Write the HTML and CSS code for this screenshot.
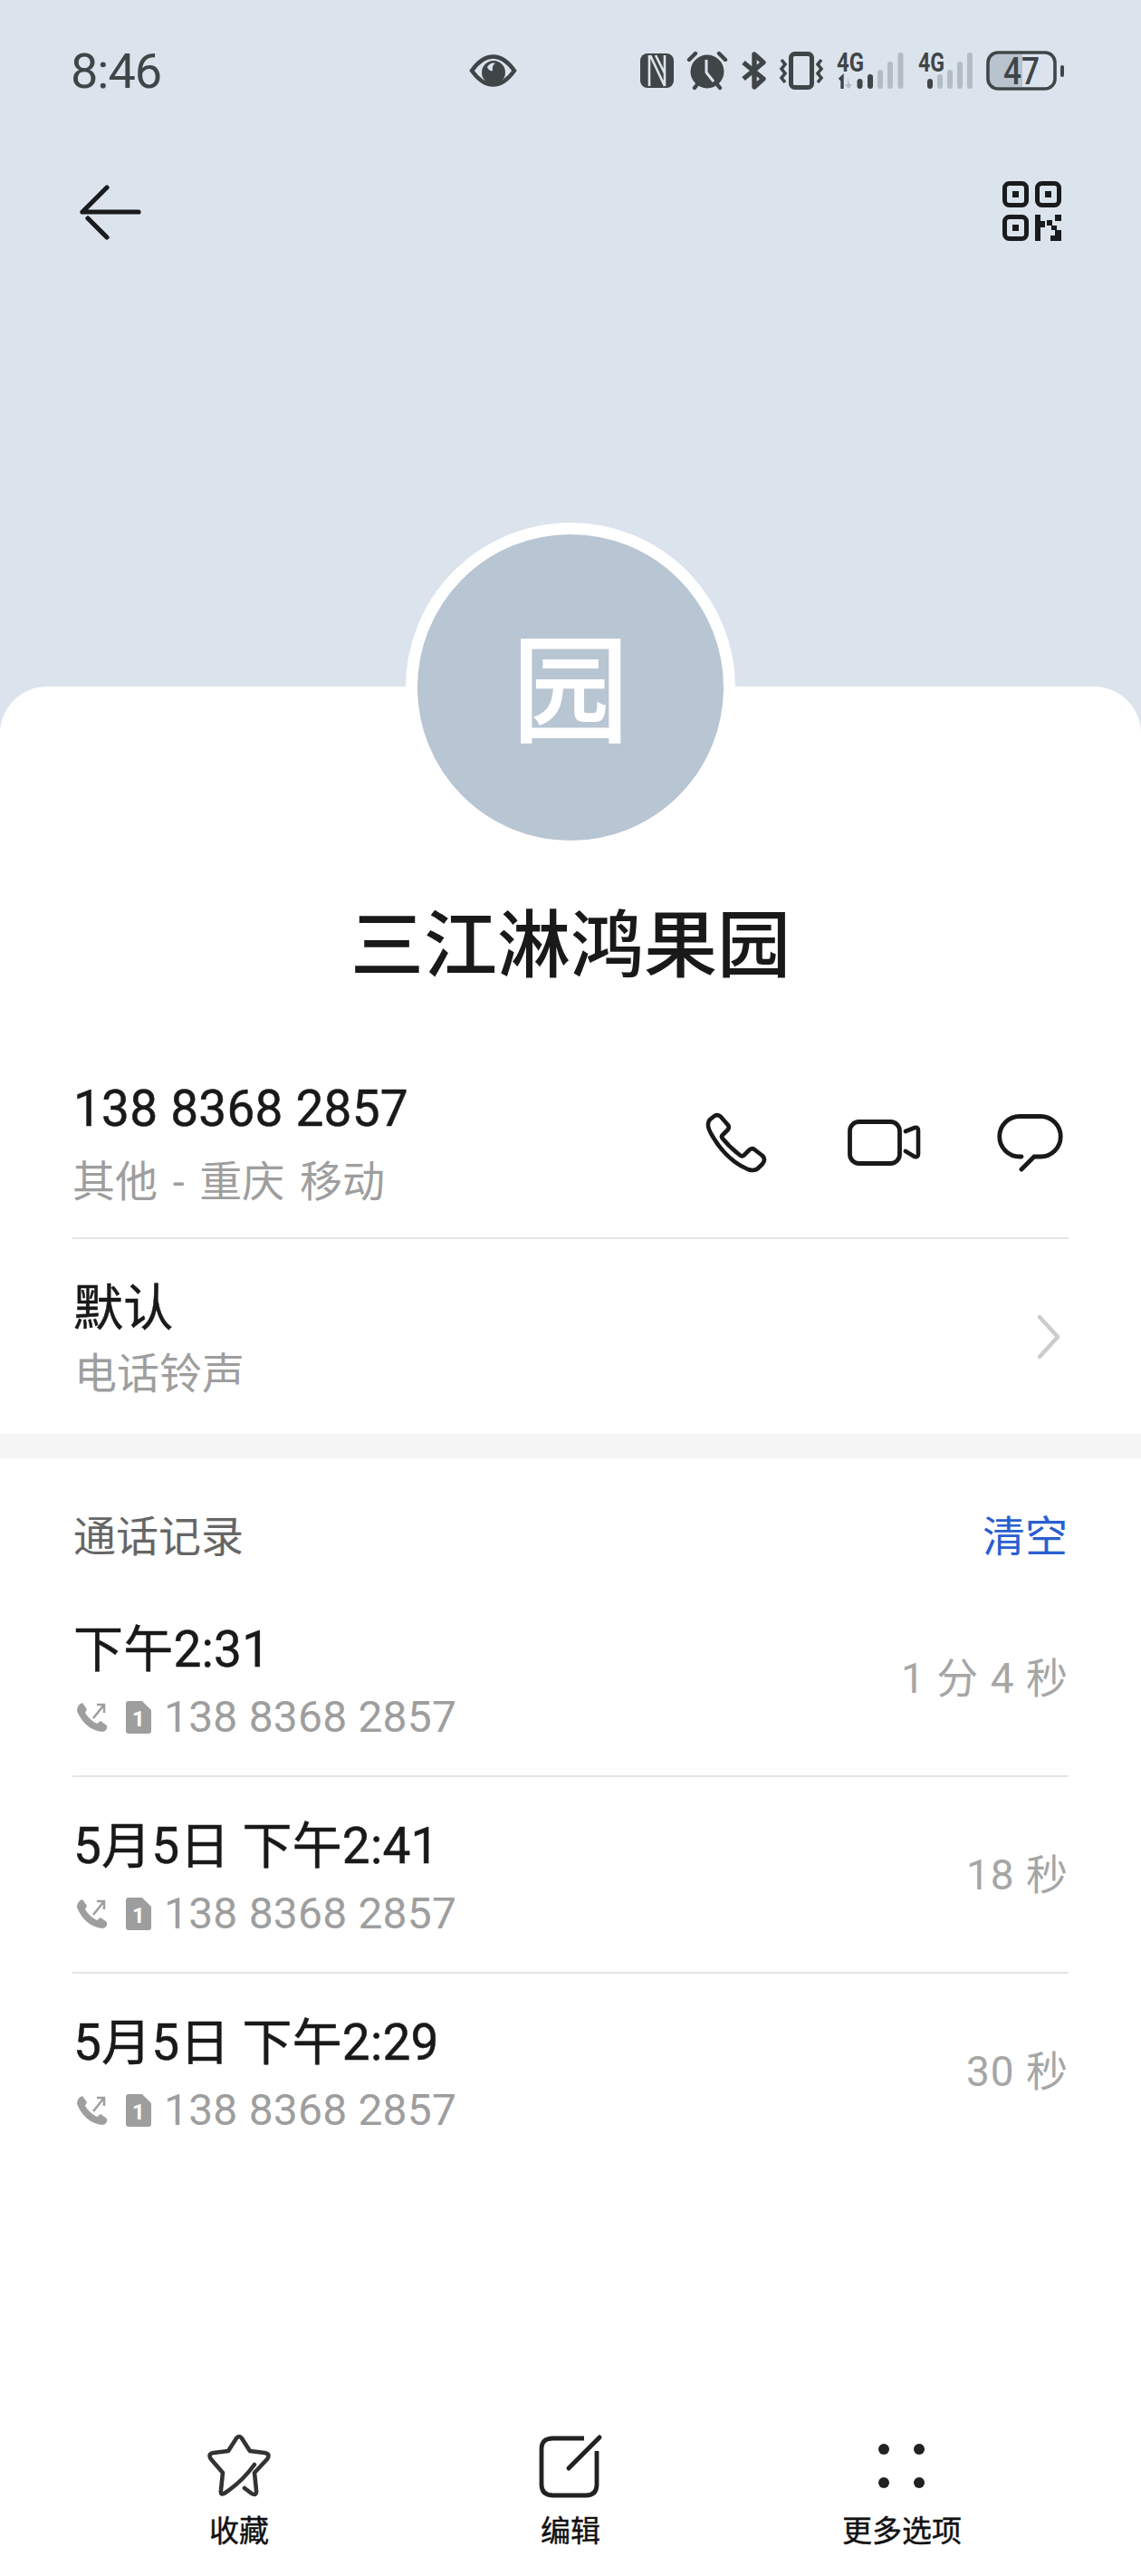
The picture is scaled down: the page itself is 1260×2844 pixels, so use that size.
FILE: index.html
```html
<!DOCTYPE html>
<html lang="zh-CN">
<head>
    <meta charset="UTF-8">
    <meta name="viewport" content="width=device-width, initial-scale=1.0">
    <title>三江淋鸿果园</title>
    <link rel="stylesheet" href="styles.css">
</head>
<body>
    <div class="app-container">
        <header class="hero">
            <div class="status-bar">
                <span class="status-time">8:46</span>
                <svg class="status-eye" width="53" height="36" viewBox="0 0 53 36">
                    <path d="M3 18 Q14 2.5 26.5 2.5 Q39 2.5 50 18 Q39 33.5 26.5 33.5 Q14 33.5 3 18Z" fill="none" stroke="#404548" stroke-width="4.5"/>
                    <circle cx="27" cy="20" r="13" fill="#404548"/>
                    <path d="M20 14 Q24 8 29 10 Q25 12 26 18 Q22 19 20 14Z" fill="#dbe4ed"/>
                </svg>
                <svg class="status-icon" width="37" height="38" viewBox="0 0 37 38">
                    <rect width="37" height="38" rx="8" fill="#404548"/>
                    <path d="M10 2 V36 M11 2 L27 36 M27 2 V36 M17 2 L27 22" fill="none" stroke="#dbe4ed" stroke-width="2.6"/>
                </svg>
                <svg class="status-icon" width="44" height="42" viewBox="0 0 44 42">
                    <circle cx="22" cy="22" r="18.5" fill="#404548"/>
                    <path d="M2 9 L9 2 M42 9 L35 2 M8 40 L12 35 M36 40 L32 35" stroke="#404548" stroke-width="4.4" stroke-linecap="round"/>
                    <path d="M21 9 V23 L29 33" fill="none" stroke="#dbe4ed" stroke-width="3"/>
                </svg>
                <svg class="status-icon" width="28" height="42" viewBox="0 0 28 42">
                    <path d="M3 12 L25 30 L15 39 V3 L25 12 L3 30" fill="none" stroke="#404548" stroke-width="5.4" stroke-linejoin="round"/>
                </svg>
                <svg class="status-icon" width="48" height="42" viewBox="0 0 48 42">
                    <rect x="12.5" y="2.5" width="23" height="37" rx="4" fill="none" stroke="#404548" stroke-width="5"/>
                    <path d="M2 9 L6 14 L2 19 L6 24 L2 29 L6 34 M46 9 L42 14 L46 19 L42 24 L46 29 L42 34" fill="none" stroke="#404548" stroke-width="3.6"/>
                </svg>
                <svg class="status-icon" width="75" height="42" viewBox="0 0 75 42">
                    <text x="0" y="22" class="net-label" textLength="30" lengthAdjust="spacingAndGlyphs">4G</text>
                    <path d="M3 31 L6 28 V41" fill="none" stroke="#404548" stroke-width="3.4"/>
                    <path d="M12 29 V36 H9 L13 41 L17 36 H14" fill="#b3bcc5"/>
                    <rect x="22.5" y="30" width="6" height="11" rx="3" fill="#404548"/>
                    <rect x="34" y="25" width="6" height="16" rx="3" fill="#404548"/>
                    <rect x="45" y="20" width="6" height="21" rx="3" fill="#b3bcc5"/>
                    <rect x="56" y="11" width="6" height="30" rx="3" fill="#b3bcc5"/>
                    <rect x="67.5" y="1" width="6" height="40" rx="3" fill="#b3bcc5"/>
                </svg>
                <svg class="status-icon" width="60" height="42" viewBox="0 0 60 42">
                    <text x="0" y="22" class="net-label" textLength="29" lengthAdjust="spacingAndGlyphs">4G</text>
                    <rect x="10" y="30" width="6" height="11" rx="3" fill="#404548"/>
                    <rect x="21" y="25" width="6" height="16" rx="3" fill="#b3bcc5"/>
                    <rect x="32" y="20" width="6" height="21" rx="3" fill="#b3bcc5"/>
                    <rect x="43" y="11" width="6" height="30" rx="3" fill="#b3bcc5"/>
                    <rect x="54" y="1" width="6" height="40" rx="3" fill="#b3bcc5"/>
                </svg>
                <svg class="status-icon" width="86" height="44" viewBox="0 0 86 44">
                    <rect x="4" y="4" width="36" height="36" fill="#b9c3cd"/>
                    <rect x="2" y="2" width="74" height="40" rx="11" fill="none" stroke="#404548" stroke-width="3.6"/>
                    <rect x="82" y="16" width="4" height="13" rx="2" fill="#404548"/>
                    <text x="39" y="37" text-anchor="middle" class="battery-label" textLength="40" lengthAdjust="spacingAndGlyphs">47</text>
                </svg>
            </div>
            <div class="hero-nav">
                <svg width="70" height="60" viewBox="0 0 70 60">
                    <path d="M3 30 H65 M3 30 L30 3 M9 37 L30 58" fill="none" stroke="#191b1d" stroke-width="5.2" stroke-linecap="round"/>
                </svg>
                <svg width="66" height="68" viewBox="0 0 66 68">
                    <g fill="none" stroke="#191b1d" stroke-width="5">
                        <rect x="2.5" y="2.5" width="24" height="24" rx="5"/>
                        <rect x="38.5" y="2.5" width="24" height="24" rx="5"/>
                        <rect x="2.5" y="39.5" width="24" height="24" rx="5"/>
                    </g>
                    <g fill="#191b1d">
                        <rect x="11" y="11" width="7" height="7"/>
                        <rect x="47" y="11" width="7" height="7"/>
                        <rect x="11" y="48" width="7" height="7"/>
                        <path d="M36 37 H42 V44 H47 V51 H42 V66 H36Z M49 49 H55 V43 H49Z M58 37 H65 V44 H58Z M54 49 H60 V54 H65 V66 H53 V60 H58 V54 H54Z"/>
                    </g>
                </svg>
            </div>
        </header>

        <main class="panel">
            <div class="avatar">园</div>
            <h1 class="contact-name">三江淋鸿果园</h1>

            <section class="info-block">
                <div class="phone-row">
                    <div>
                        <div class="primary-text">138 8368 2857</div>
                        <div class="secondary-text">其他 - 重庆 移动</div>
                    </div>
                    <div class="phone-actions">
                        <svg width="66" height="66" viewBox="0 0 66 66">
                            <path d="M9 3 Q13 1 16 4 L23 12 Q26 15 24 18 L18 24 Q16 26 18 28 Q26 38 38 47 Q40 48 42 46 L47 41 Q50 38 53 40 L62 47 Q66 51 62 56 L59 59 Q54 65 46 62 Q22 52 6 24 Q-1 12 4 7Z" fill="none" stroke="#191919" stroke-width="4.6" stroke-linejoin="round"/>
                        </svg>
                        <svg width="80" height="52" viewBox="0 0 80 52">
                            <rect x="2.5" y="2.5" width="55" height="46" rx="10" fill="none" stroke="#191919" stroke-width="4.8"/>
                            <path d="M64 13 L74 9 Q78 8 78 12 V38 Q78 42 74 41 L64 35" fill="none" stroke="#191919" stroke-width="4.6" stroke-linecap="round"/>
                        </svg>
                        <svg class="action-chat" width="73" height="64" viewBox="0 0 73 64">
                            <path d="M27 47 H25 A22.2 22.2 0 0 1 25 2.5 H48 A22.2 22.2 0 0 1 48 47 H41 L27 61" fill="none" stroke="#191919" stroke-width="4.8" stroke-linecap="round"/>
                        </svg>
                    </div>
                </div>
                <div class="ringtone-row">
                    <div>
                        <div class="primary-text">默认</div>
                        <div class="secondary-text">电话铃声</div>
                    </div>
                    <svg class="chevron" width="28" height="50" viewBox="0 0 28 50">
                        <path d="M4 3 L24 25 L4 47" fill="none" stroke="#cccccc" stroke-width="4.4" stroke-linecap="round" stroke-linejoin="round"/>
                    </svg>
                </div>
            </section>

            <div class="section-gap"></div>

            <section class="log-block">
                <div class="log-header">
                    <span class="log-title">通话记录</span>
                    <span class="log-clear">清空</span>
                </div>
                <div class="log-row">
                    <div>
                        <div class="primary-text">下午2:31</div>
                        <div class="log-detail">
                            <svg class="log-call" width="35" height="34" viewBox="0 0 35 34">
                                <path d="M7 1 L12 8 L10 12 Q15 20 23 24 L27 21 L34 26 Q35 32 29 33 Q10 31 1 10 Q1 3 7 1Z" fill="#9e9e9e"/>
                                <path d="M19 18 L31 3 M23 3 H31 V12" fill="none" stroke="#9e9e9e" stroke-width="2.5"/>
                            </svg>
                            <span class="log-sim">1</span>
                            <span>138 8368 2857</span>
                        </div>
                    </div>
                    <span class="log-duration">1 分 4 秒</span>
                </div>
                <div class="log-row">
                    <div>
                        <div class="primary-text">5月5日 下午2:41</div>
                        <div class="log-detail">
                            <svg class="log-call" width="35" height="34" viewBox="0 0 35 34">
                                <path d="M7 1 L12 8 L10 12 Q15 20 23 24 L27 21 L34 26 Q35 32 29 33 Q10 31 1 10 Q1 3 7 1Z" fill="#9e9e9e"/>
                                <path d="M19 18 L31 3 M23 3 H31 V12" fill="none" stroke="#9e9e9e" stroke-width="2.5"/>
                            </svg>
                            <span class="log-sim">1</span>
                            <span>138 8368 2857</span>
                        </div>
                    </div>
                    <span class="log-duration">18 秒</span>
                </div>
                <div class="log-row">
                    <div>
                        <div class="primary-text">5月5日 下午2:29</div>
                        <div class="log-detail">
                            <svg class="log-call" width="35" height="34" viewBox="0 0 35 34">
                                <path d="M7 1 L12 8 L10 12 Q15 20 23 24 L27 21 L34 26 Q35 32 29 33 Q10 31 1 10 Q1 3 7 1Z" fill="#9e9e9e"/>
                                <path d="M19 18 L31 3 M23 3 H31 V12" fill="none" stroke="#9e9e9e" stroke-width="2.5"/>
                            </svg>
                            <span class="log-sim">1</span>
                            <span>138 8368 2857</span>
                        </div>
                    </div>
                    <span class="log-duration">30 秒</span>
                </div>
            </section>
        </main>

        <footer class="bottom-bar">
            <div class="bottom-item">
                <svg width="70" height="70" viewBox="0 0 70 70">
                    <path d="M41 59 L49 65 Q55 68 54 61 L52 42 L66 27 Q70 21 63 20 L47 18 L38 4 Q35 0 32 4 L23 18 L7 20 Q0 21 4 27 L17 42 L15 61 Q14 68 20 64 Q38 52 52 33" fill="none" stroke="#333333" stroke-width="4.6" stroke-linecap="round" stroke-linejoin="round"/>
                </svg>
                <span>收藏</span>
            </div>
            <div class="bottom-item">
                <svg width="70" height="70" viewBox="0 0 70 70">
                    <path d="M50 4 H16 Q3 4 3 16 V55 Q3 67 16 67 H52 Q64 67 64 55 V18" fill="none" stroke="#222222" stroke-width="4.8"/>
                    <path d="M67 3 L33 37" fill="none" stroke="#222222" stroke-width="5" stroke-linecap="round"/>
                </svg>
                <span>编辑</span>
            </div>
            <div class="bottom-item">
                <svg width="70" height="70" viewBox="0 0 70 70">
                    <g fill="#222222">
                        <circle cx="15" cy="16" r="6"/>
                        <circle cx="54" cy="16" r="6"/>
                        <circle cx="15" cy="53" r="6"/>
                        <circle cx="54" cy="53" r="6"/>
                    </g>
                </svg>
                <span>更多选项</span>
            </div>
        </footer>
    </div>
</body>
</html>
```

FILE: styles.css
```css
:root {
    --hero-bg: #dbe4ed;
    --avatar-bg: #b8c5d2;
    --text-primary: #191919;
    --text-secondary: #9e9e9e;
    --status-ink: #404548;
    --border: #e4e4e4;
    --link: #2a5fd0;
}

* {
    box-sizing: border-box;
    margin: 0;
    padding: 0;
}

body {
    font-family: Roboto, "Noto Sans CJK SC", sans-serif;
    background-color: #ffffff;
    color: var(--text-primary);
    overflow: hidden;
}

svg {
    display: block;
    flex-shrink: 0;
    overflow: visible;
}

.app-container {
    width: 1260px;
    height: 2844px;
    display: flex;
    flex-direction: column;
}

.hero {
    height: 810px;
    padding-top: 50px;
    background-color: var(--hero-bg);
}

.status-bar {
    height: 56px;
    padding-left: 78px;
    display: flex;
    align-items: center;
    gap: 15px;
}

.status-time {
    width: 100px;
    padding-top: 2px;
    font-size: 54px;
    line-height: 56px;
    letter-spacing: -1px;
    white-space: nowrap;
    color: var(--status-ink);
}

.status-eye {
    margin: 0 121px 0 325px;
}

.net-label {
    font-family: Roboto, sans-serif;
    font-weight: 700;
    font-size: 29px;
    fill: var(--status-ink);
}

.battery-label {
    font-family: Roboto, sans-serif;
    font-weight: 500;
    font-size: 42px;
    fill: var(--status-ink);
}

.hero-nav {
    margin-top: 94px;
    padding: 0 87px 0 88px;
    display: flex;
    align-items: center;
    justify-content: space-between;
}

.panel {
    flex: 1;
    margin-top: -52px;
    background-color: #ffffff;
    border-radius: 52px 52px 0 0;
    display: flex;
    flex-direction: column;
}

.avatar {
    width: 364px;
    height: 364px;
    margin: -181px auto 0;
    padding-bottom: 14px;
    border: 13px solid #ffffff;
    border-radius: 50%;
    background-color: var(--avatar-bg);
    color: #ffffff;
    font-size: 130px;
    font-weight: 500;
    display: flex;
    align-items: center;
    justify-content: center;
}

.contact-name {
    margin-top: 54px;
    font-size: 81px;
    font-weight: 500;
    line-height: 100px;
    text-align: center;
}

.info-block {
    padding: 94px 80px 36px;
}

.phone-row {
    display: flex;
    justify-content: space-between;
    align-items: center;
    padding-bottom: 31px;
    border-bottom: 2px solid var(--border);
}

.phone-actions {
    display: flex;
    align-items: center;
    gap: 90px;
    padding-right: 6px;
}

.action-chat {
    margin-left: -5px;
}

.primary-text {
    padding-left: 1px;
    font-size: 55px;
    line-height: 70px;
    letter-spacing: 0.2px;
    white-space: nowrap;
    -webkit-text-stroke: 0.5px currentColor;
}

.secondary-text {
    margin-top: 16px;
    font-size: 47px;
    line-height: 60px;
    word-spacing: 5px;
    color: var(--text-secondary);
}

.ringtone-row {
    display: flex;
    justify-content: space-between;
    align-items: center;
    padding: 41px 8px 0 0;
}

.ringtone-row .secondary-text {
    margin-top: 8px;
    padding-left: 2px;
}

.chevron {
    margin-top: -4px;
}

.section-gap {
    height: 27px;
    background-color: #f5f5f5;
}

.log-block {
    padding: 57px 80px 0;
}

.log-header {
    display: flex;
    justify-content: space-between;
    align-items: center;
    margin-bottom: 18px;
    font-size: 47px;
    line-height: 60px;
}

.log-title {
    padding-left: 1px;
    color: #666666;
}

.log-clear {
    padding-right: 1px;
    color: var(--link);
}

.log-row {
    display: flex;
    justify-content: space-between;
    align-items: center;
    padding: 41px 0 34px;
    border-bottom: 2px solid var(--border);
}

.log-row:last-child {
    border-bottom: none;
}

.log-detail {
    margin-top: 10px;
    display: flex;
    align-items: center;
    padding-left: 4px;
    font-size: 48px;
    line-height: 60px;
    letter-spacing: 0.2px;
    white-space: nowrap;
    color: var(--text-secondary);
}

.log-call {
    margin-right: 20px;
}

/* sim badge, corner cut with clip-path */
.log-sim {
    width: 28px;
    height: 36px;
    margin-right: 14px;
    background-color: var(--text-secondary);
    border-radius: 3px;
    clip-path: polygon(0 0, 64% 0, 100% 28%, 100% 100%, 0 100%);
    color: #ffffff;
    font-size: 24px;
    font-weight: 700;
    line-height: 40px;
    text-align: center;
}

.log-duration {
    margin-bottom: 14px;
    font-size: 46px;
    color: #a6a6a6;
    letter-spacing: 1px;
}

.bottom-bar {
    padding: 0 81px 27px;
    display: grid;
    grid-template-columns: repeat(3, 1fr);
}

.bottom-item {
    display: flex;
    flex-direction: column;
    align-items: center;
    gap: 15px;
    font-size: 33px;
    line-height: 44px;
    color: #111111;
    -webkit-text-stroke: 0.4px currentColor;
}
```
